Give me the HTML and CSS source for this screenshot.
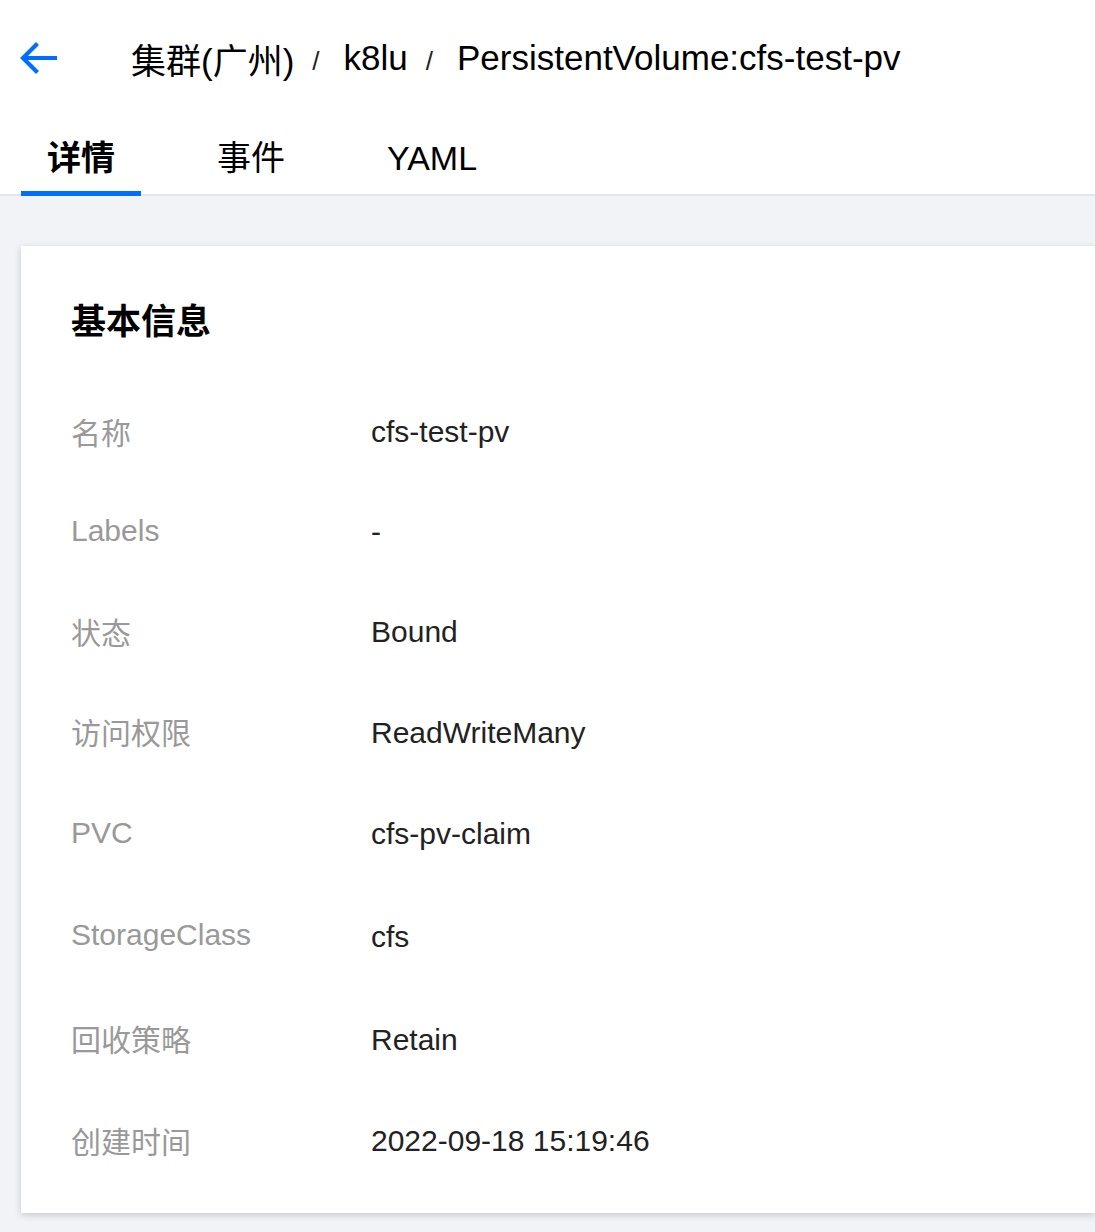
FILE: index.html
```html
<!DOCTYPE html>
<html lang="zh-CN">
<head>
<meta charset="utf-8">
<title>PersistentVolume:cfs-test-pv</title>
<link rel="stylesheet" href="styles.css">
</head>
<body>
<div class="page">
  <header class="topbar">
    <svg class="back" width="40" height="40" viewBox="0 0 40 40" aria-hidden="true">
      <path d="M3 20 H37 M17.5 5.5 L3 20 L17.5 34.5" fill="none" stroke="#006eff" stroke-width="4.2" stroke-linejoin="miter"/>
    </svg>
    <nav class="crumbs">
      <span class="crumb">集群(广州)</span>
      <span class="sep">/</span>
      <span class="crumb">k8lu</span>
      <span class="sep">/</span>
      <span class="crumb">PersistentVolume:cfs-test-pv</span>
    </nav>
  </header>
  <div class="tabs">
    <div class="tab active">详情</div>
    <div class="tab">事件</div>
    <div class="tab">YAML</div>
  </div>
  <main class="content">
    <section class="card">
      <h2 class="card-title">基本信息</h2>
      <div class="info">
        <div class="row"><div class="label">名称</div><div class="value">cfs-test-pv</div></div>
        <div class="row"><div class="label">Labels</div><div class="value">-</div></div>
        <div class="row"><div class="label">状态</div><div class="value">Bound</div></div>
        <div class="row"><div class="label">访问权限</div><div class="value">ReadWriteMany</div></div>
        <div class="row"><div class="label">PVC</div><div class="value">cfs-pv-claim</div></div>
        <div class="row"><div class="label">StorageClass</div><div class="value">cfs</div></div>
        <div class="row"><div class="label">回收策略</div><div class="value">Retain</div></div>
        <div class="row"><div class="label">创建时间</div><div class="value">2022-09-18 15:19:46</div></div>
      </div>
    </section>
  </main>
</div>
</body>
</html>
```
FILE: styles.css
```css
* { box-sizing: border-box; }
html, body {
  margin: 0;
  padding: 0;
  background: #f2f3f7;
}
body {
  font-family: "Liberation Sans", Arial, "Noto Sans CJK SC", sans-serif;
  color: #000;
}
.page {
  width: 1095px;
  height: 1232px;
  overflow: hidden;
  display: flex;
  flex-direction: column;
}
.topbar {
  height: 116px;
  background: #fff;
  display: flex;
  align-items: center;
  padding-left: 20px;
}
.back {
  flex: none;
  display: block;
  margin-top: -1px;
}
.crumbs {
  margin-left: 71px;
  display: flex;
  align-items: center;
  font-size: 35px;
  color: #000;
}
.sep {
  font-size: 26px;
  margin: 6px 24px 0 18px;
  color: #222;
}
.tabs {
  height: 80px;
  background: #fff;
  display: flex;
  gap: 50px;
  padding-left: 21px;
  border-bottom: 2px solid #e4e7ed;
}
.tab {
  position: relative;
  padding: 0 26px;
  font-size: 34px;
  line-height: 78px;
  height: 78px;
  padding-top: 3px;
  color: #000;
}
.tab.active {
  font-weight: bold;
}
.tab.active::after {
  content: "";
  position: absolute;
  left: 0;
  right: 0;
  bottom: -2px;
  height: 5px;
  background: #006eff;
}
.content {
  flex: 1;
  padding: 50px 0 19px 21px;
}
.card {
  background: #fff;
  height: 967px;
  box-shadow: 0 2px 7px rgba(0, 0, 0, 0.18);
  padding: 52px 0 0 50px;
}
.card-title {
  margin: 0;
  font-size: 35px;
  line-height: 48px;
  font-weight: bold;
  color: #000;
}
.info {
  margin-top: 36px;
  display: grid;
  grid-template-rows: 100px 100px 100px 101px 102px 103px 103px 100px;
}
.row {
  display: flex;
  align-items: center;
  font-size: 30px;
}
.label {
  width: 300px;
  color: #999;
  margin-top: -3px;
}
.value {
  color: #222;
}
```
